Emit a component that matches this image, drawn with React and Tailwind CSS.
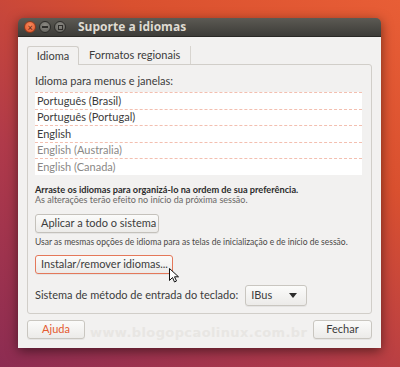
import React from 'react';

const langs = [
  { name: 'Português (Brasil)', on: true },
  { name: 'Português (Portugal)', on: true },
  { name: 'English', on: true },
  { name: 'English (Australia)', on: false },
  { name: 'English (Canada)', on: false },
];

function TitleButtons() {
  return (
    <div className="flex items-center gap-[3px] pl-[6px]">
      <span className="flex h-[12px] w-[12px] items-center justify-center rounded-full border border-[#8c3a1e] bg-[radial-gradient(circle_at_50%_35%,#f88a5c,#e0532a)] text-[9px] leading-none text-[#5a2010]">×</span>
      <span className="flex h-[12px] w-[12px] items-center justify-center rounded-full border border-[#2e2d2a] bg-[radial-gradient(circle_at_50%_35%,#8c8a84,#5f5e59)]">
        <span className="h-[1.5px] w-[6px] bg-[#2e2d2a]" />
      </span>
      <span className="flex h-[12px] w-[12px] items-center justify-center rounded-full border border-[#2e2d2a] bg-[radial-gradient(circle_at_50%_35%,#8c8a84,#5f5e59)]">
        <span className="h-[5px] w-[5px] border border-[#2e2d2a]" />
      </span>
    </div>
  );
}

function Button({ children, className = '' }) {
  return (
    <div className={'flex items-center whitespace-nowrap rounded-[3px] border bg-gradient-to-b from-[#fbfbfa] to-[#ecebe9] shadow-[0_1px_0_rgba(0,0,0,0.05)] ' + className}>
      {children}
    </div>
  );
}

export default function App() {
  return (
    <div className="relative h-[367px] w-[400px] overflow-hidden bg-[linear-gradient(35deg,#8c2c52_0%,#b03a4a_35%,#d9502f_70%,#e85e36_100%)] pl-[18px] pt-[18px] font-['Lato',sans-serif]">
      <div className="flex h-[330px] w-[363px] flex-col overflow-hidden rounded-t-[5px] shadow-[0_3px_12px_rgba(0,0,0,0.5)]">
        {/* title bar */}
        <div className="flex h-[19px] items-center border-b border-[#2a2926] bg-gradient-to-b from-[#5c5a54] to-[#3d3c38]">
          <TitleButtons />
          <span className="ml-[12px] text-[12px] font-bold leading-none text-[#dfdbd2] font-['Open_Sans',sans-serif]">Suporte a idiomas</span>
        </div>

        {/* body */}
        <div className="relative flex flex-1 flex-col bg-[#f2f1f0] px-[9px] pt-[9px] text-[#3c3c3c]">
          <div className="flex h-[18px] items-end">
            <div className="relative top-[1px] flex h-[19px] w-[52px] items-center justify-center rounded-t-[3px] border border-b-0 border-[#d1cec9] bg-[#f2f1f0] text-[11px]">Idioma</div>
            <div className="ml-[10px] flex h-[18px] items-center text-[11px]">Formatos regionais</div>
            <div className="ml-[10px] h-[18px] border-l border-[#d8d5d0]" />
          </div>

          <div className="flex h-[250px] flex-col rounded-b-[3px] rounded-tr-[3px] border border-[#d1cec9] px-[7px]">
            <div className="mt-[9px] text-[11px] leading-[14px]">Idioma para menus e janelas:</div>
            <div className="mt-[4px] mr-[2px] bg-white">
              {langs.map(l => (
                <div key={l.name} className={'flex h-[16.6px] items-center border-t border-dashed border-[#f3bfb0] pl-[2px] text-[11px] ' + (l.on ? 'text-[#3c3c3c]' : 'text-[#8a8886]')}>
                  {l.name}
                </div>
              ))}
            </div>

            <div className="mt-[10px] whitespace-nowrap text-[9.2px] font-bold leading-[10px] text-[#2c2c2c]">Arraste os idiomas para organizá-lo na ordem de sua preferência.</div>
            <div className="whitespace-nowrap text-[9px] leading-[10px] text-[#6a6866]">As alterações terão efeito no início da próxima sessão.</div>

            <Button className="mt-[9px] h-[19px] w-[124px] border-[#c4c1bb] pl-[5px] text-[11px]">Aplicar a todo o sistema</Button>
            <div className="mt-[4px] whitespace-nowrap text-[8.5px] leading-[10px] text-[#4a4846]">Usar as mesmas opções de idioma para as telas de inicialização e de início de sessão.</div>

            <Button className="mt-[8px] h-[19px] w-[138px] border-[#e4785a] pl-[5px] text-[11px]">Instalar/remover idiomas...</Button>

            <div className="mt-[11px] flex items-center">
              <span className="whitespace-nowrap text-[11px]">Sistema de método de entrada do teclado:</span>
              <Button className="ml-[7px] h-[21px] w-[62px] justify-between border-[#c9c6c0] pl-[5px] pr-[9px] text-[11px]">
                <span>IBus</span>
                <svg width="8" height="5" viewBox="0 0 8 5"><path d="M0 0h8L4 5z" fill="#2c2c2c" /></svg>
              </Button>
            </div>
          </div>

          <div className="mt-[6px] flex items-center justify-between">
            <Button className="h-[19px] w-[58px] justify-center border-[#c9c6c0] text-[11px] text-[#e45a30]">Ajuda</Button>
            <Button className="h-[19px] w-[59px] justify-center border-[#c9c6c0] text-[11px]">Fechar</Button>
          </div>

          <div className="absolute left-[72px] top-[286px] text-[13px] font-bold tracking-[0.4px] text-[#e8e6e3] font-['DejaVu_Sans',sans-serif]">www.blogopcaolinux.com.br</div>

          <svg className="absolute left-[151px] top-[231px]" width="10" height="15" viewBox="0 0 10 15">
            <path d="M0.5 0.5v12l3-3 2 4.5 2-1-2-4.2h4z" fill="#fff" stroke="#111" strokeWidth="1" strokeLinejoin="round" />
          </svg>
        </div>
      </div>
    </div>
  );
}
